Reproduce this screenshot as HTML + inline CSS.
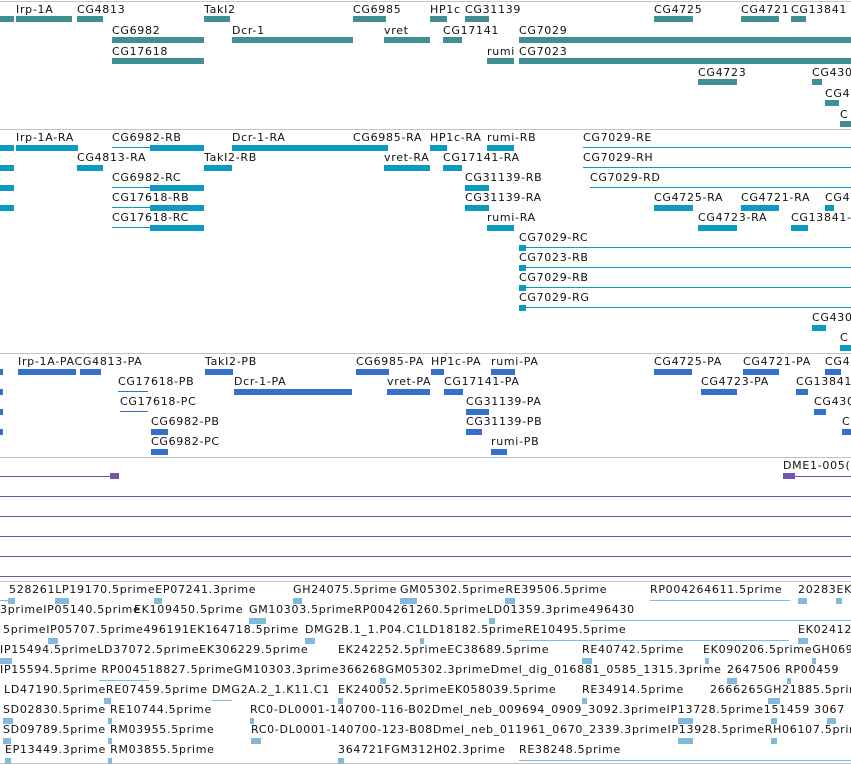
<!DOCTYPE html>
<html><head><meta charset="utf-8">
<style>
body{margin:0;width:851px;height:765px;overflow:hidden;background:#fff;position:relative;font-family:"DejaVu Sans","Liberation Sans",sans-serif;}
.t{position:absolute;font-size:11px;line-height:13px;color:#111;white-space:nowrap;letter-spacing:0.7px;}
.b{position:absolute;height:6px;}
.l{position:absolute;height:1px;}
.d{position:absolute;left:0;width:851px;height:1px;background:#c4c4c4;}
.a{background:#3f8f93}.c{background:#0b9ac0}.p{background:#3470cc}.v{background:#7454ad}.e{background:#82bade}
</style></head><body>
<div class="d" style="top:1px"></div>
<div class="d" style="top:129px"></div>
<div class="d" style="top:353px"></div>
<div class="d" style="top:457px"></div>
<div class="d" style="top:581px;"></div>
<div class="d" style="top:763px"></div>

<!-- Track 1 -->
<div class="b a" style="left:0;top:16px;width:14px"></div>
<div class="t" style="left:16px;top:3px">Irp-1A</div><div class="b a" style="left:16px;top:16px;width:56px"></div>
<div class="t" style="left:77px;top:3px">CG4813</div><div class="b a" style="left:77px;top:16px;width:26px"></div>
<div class="t" style="left:204px;top:3px">TakI2</div><div class="b a" style="left:204px;top:16px;width:26px"></div>
<div class="t" style="left:353px;top:3px">CG6985</div><div class="b a" style="left:353px;top:16px;width:33px"></div>
<div class="t" style="left:430px;top:3px">HP1c</div><div class="b a" style="left:430px;top:16px;width:17px"></div>
<div class="t" style="left:465px;top:3px">CG31139</div><div class="b a" style="left:465px;top:16px;width:24px"></div>
<div class="t" style="left:654px;top:3px">CG4725</div><div class="b a" style="left:654px;top:16px;width:39px"></div>
<div class="t" style="left:741px;top:3px">CG4721</div><div class="b a" style="left:741px;top:16px;width:38px"></div>
<div class="t" style="left:791px;top:3px">CG13841</div><div class="b a" style="left:791px;top:16px;width:15px"></div>
<div class="t" style="left:112px;top:24px">CG6982</div><div class="b a" style="left:112px;top:37px;width:92px"></div>
<div class="t" style="left:232px;top:24px">Dcr-1</div><div class="b a" style="left:232px;top:37px;width:121px"></div>
<div class="t" style="left:384px;top:24px">vret</div><div class="b a" style="left:384px;top:37px;width:46px"></div>
<div class="t" style="left:443px;top:24px">CG17141</div><div class="b a" style="left:443px;top:37px;width:19px"></div>
<div class="t" style="left:519px;top:24px">CG7029</div><div class="b a" style="left:519px;top:37px;width:332px"></div>
<div class="t" style="left:112px;top:45px">CG17618</div><div class="b a" style="left:112px;top:58px;width:92px"></div>
<div class="t" style="left:487px;top:45px">rumi</div><div class="b a" style="left:487px;top:58px;width:27px"></div>
<div class="t" style="left:519px;top:45px">CG7023</div><div class="b a" style="left:519px;top:58px;width:332px"></div>
<div class="t" style="left:698px;top:66px">CG4723</div><div class="b a" style="left:698px;top:79px;width:39px"></div>
<div class="t" style="left:812px;top:66px">CG430</div><div class="b a" style="left:812px;top:79px;width:10px"></div>
<div class="t" style="left:825px;top:87px">CG4</div><div class="b a" style="left:825px;top:100px;width:14px"></div>
<div class="t" style="left:840px;top:108px">C</div><div class="b a" style="left:840px;top:121px;width:11px"></div>

<!-- Track 2 -->
<div class="b c" style="left:0;top:145px;width:14px"></div>
<div class="t" style="left:16px;top:131px">Irp-1A-RA</div><div class="b c" style="left:16px;top:145px;width:62px"></div>
<div class="t" style="left:112px;top:131px">CG6982-RB</div><div class="l c" style="left:112px;top:147px;width:40px"></div><div class="b c" style="left:150px;top:145px;width:54px"></div>
<div class="t" style="left:232px;top:131px">Dcr-1-RA</div><div class="b c" style="left:232px;top:145px;width:156px"></div>
<div class="t" style="left:353px;top:131px">CG6985-RA</div>
<div class="t" style="left:430px;top:131px">HP1c-RA</div><div class="b c" style="left:430px;top:145px;width:17px"></div>
<div class="t" style="left:487px;top:131px">rumi-RB</div><div class="b c" style="left:487px;top:145px;width:27px"></div>
<div class="t" style="left:583px;top:131px">CG7029-RE</div><div class="l c" style="left:583px;top:147px;width:268px"></div>
<div class="b c" style="left:0;top:165px;width:14px"></div>
<div class="t" style="left:77px;top:151px">CG4813-RA</div><div class="b c" style="left:77px;top:165px;width:26px"></div>
<div class="t" style="left:204px;top:151px">TakI2-RB</div><div class="b c" style="left:204px;top:165px;width:28px"></div>
<div class="t" style="left:384px;top:151px">vret-RA</div><div class="b c" style="left:384px;top:165px;width:46px"></div>
<div class="t" style="left:443px;top:151px">CG17141-RA</div><div class="b c" style="left:443px;top:165px;width:19px"></div>
<div class="t" style="left:583px;top:151px">CG7029-RH</div><div class="l c" style="left:583px;top:167px;width:268px"></div>
<div class="b c" style="left:0;top:185px;width:14px"></div>
<div class="t" style="left:112px;top:171px">CG6982-RC</div><div class="l c" style="left:112px;top:187px;width:40px"></div><div class="b c" style="left:150px;top:185px;width:54px"></div>
<div class="t" style="left:465px;top:171px">CG31139-RB</div><div class="b c" style="left:465px;top:185px;width:24px"></div>
<div class="t" style="left:590px;top:171px">CG7029-RD</div><div class="l c" style="left:590px;top:187px;width:261px"></div>
<div class="b c" style="left:0;top:205px;width:14px"></div>
<div class="t" style="left:112px;top:191px">CG17618-RB</div><div class="l c" style="left:112px;top:207px;width:40px"></div><div class="b c" style="left:150px;top:205px;width:54px"></div>
<div class="t" style="left:465px;top:191px">CG31139-RA</div><div class="b c" style="left:465px;top:205px;width:24px"></div>
<div class="t" style="left:654px;top:191px">CG4725-RA</div><div class="b c" style="left:654px;top:205px;width:39px"></div>
<div class="t" style="left:741px;top:191px">CG4721-RA</div><div class="b c" style="left:741px;top:205px;width:38px"></div>
<div class="t" style="left:825px;top:191px">CG4</div><div class="b c" style="left:825px;top:205px;width:9px"></div>
<div class="t" style="left:112px;top:211px">CG17618-RC</div><div class="l c" style="left:112px;top:227px;width:40px"></div><div class="b c" style="left:150px;top:225px;width:54px"></div>
<div class="t" style="left:487px;top:211px">rumi-RA</div><div class="b c" style="left:487px;top:225px;width:27px"></div>
<div class="t" style="left:698px;top:211px">CG4723-RA</div><div class="b c" style="left:698px;top:225px;width:39px"></div>
<div class="t" style="left:791px;top:211px">CG13841-</div><div class="b c" style="left:791px;top:225px;width:17px"></div>
<div class="t" style="left:519px;top:231px">CG7029-RC</div><div class="l c" style="left:519px;top:247px;width:332px"></div><div class="b c" style="left:519px;top:245px;width:7px"></div>
<div class="t" style="left:519px;top:251px">CG7023-RB</div><div class="l c" style="left:519px;top:267px;width:332px"></div><div class="b c" style="left:519px;top:265px;width:7px"></div>
<div class="t" style="left:519px;top:271px">CG7029-RB</div><div class="l c" style="left:519px;top:287px;width:332px"></div><div class="b c" style="left:519px;top:285px;width:7px"></div>
<div class="t" style="left:519px;top:291px">CG7029-RG</div><div class="l c" style="left:519px;top:307px;width:332px"></div><div class="b c" style="left:519px;top:305px;width:7px"></div>
<div class="t" style="left:812px;top:311px">CG430</div><div class="b c" style="left:812px;top:325px;width:14px"></div>
<div class="t" style="left:840px;top:331px">C</div><div class="b c" style="left:840px;top:345px;width:11px"></div>

<!-- Track 3 -->
<div class="b p" style="left:0;top:369px;width:3px"></div>
<div class="t" style="left:18px;top:355px">Irp-1A-PACG4813-PA</div><div class="b p" style="left:18px;top:369px;width:58px"></div><div class="b p" style="left:80px;top:369px;width:21px"></div>
<div class="t" style="left:205px;top:355px">TakI2-PB</div><div class="b p" style="left:205px;top:369px;width:28px"></div>
<div class="t" style="left:356px;top:355px">CG6985-PA</div><div class="b p" style="left:356px;top:369px;width:33px"></div>
<div class="t" style="left:431px;top:355px">HP1c-PA</div><div class="b p" style="left:431px;top:369px;width:13px"></div>
<div class="t" style="left:491px;top:355px">rumi-PA</div><div class="b p" style="left:491px;top:369px;width:24px"></div>
<div class="t" style="left:654px;top:355px">CG4725-PA</div><div class="b p" style="left:654px;top:369px;width:38px"></div>
<div class="t" style="left:743px;top:355px">CG4721-PA</div><div class="b p" style="left:743px;top:369px;width:36px"></div>
<div class="t" style="left:825px;top:355px">CG4</div><div class="b p" style="left:825px;top:369px;width:16px"></div>
<div class="b p" style="left:0;top:389px;width:3px"></div>
<div class="t" style="left:118px;top:375px">CG17618-PB</div><div class="l p" style="left:118px;top:391px;width:30px"></div>
<div class="t" style="left:234px;top:375px">Dcr-1-PA</div><div class="b p" style="left:234px;top:389px;width:118px"></div>
<div class="t" style="left:387px;top:375px">vret-PA</div><div class="b p" style="left:387px;top:389px;width:43px"></div>
<div class="t" style="left:444px;top:375px">CG17141-PA</div><div class="b p" style="left:444px;top:389px;width:19px"></div>
<div class="t" style="left:701px;top:375px">CG4723-PA</div><div class="b p" style="left:701px;top:389px;width:36px"></div>
<div class="t" style="left:796px;top:375px">CG13841</div><div class="b p" style="left:796px;top:389px;width:12px"></div>
<div class="b p" style="left:0;top:409px;width:3px"></div>
<div class="t" style="left:120px;top:395px">CG17618-PC</div><div class="l p" style="left:120px;top:411px;width:28px"></div>
<div class="t" style="left:466px;top:395px">CG31139-PA</div><div class="b p" style="left:466px;top:409px;width:23px"></div>
<div class="t" style="left:814px;top:395px">CG430</div><div class="b p" style="left:814px;top:409px;width:12px"></div>
<div class="b p" style="left:0;top:429px;width:3px"></div>
<div class="t" style="left:151px;top:415px">CG6982-PB</div><div class="b p" style="left:151px;top:429px;width:17px"></div>
<div class="t" style="left:466px;top:415px">CG31139-PB</div><div class="b p" style="left:466px;top:429px;width:16px"></div>
<div class="t" style="left:842px;top:415px">C</div><div class="b p" style="left:842px;top:429px;width:9px"></div>
<div class="t" style="left:151px;top:435px">CG6982-PC</div><div class="b p" style="left:151px;top:449px;width:17px"></div>
<div class="t" style="left:491px;top:435px">rumi-PB</div><div class="b p" style="left:491px;top:449px;width:16px"></div>

<!-- Purple track -->
<div class="t" style="left:783px;top:459px">DME1-005(</div>
<div class="l v" style="left:0;top:476px;width:112px"></div><div class="b v" style="left:110px;top:473px;width:9px"></div>
<div class="b v" style="left:783px;top:473px;width:12px"></div><div class="l v" style="left:795px;top:476px;width:56px"></div>
<div class="l v" style="left:0;top:496px;width:851px"></div>
<div class="l v" style="left:0;top:516px;width:851px"></div>
<div class="l v" style="left:0;top:536px;width:851px"></div>
<div class="l v" style="left:0;top:556px;width:851px"></div>
<div class="l v" style="left:0;top:576px;width:851px"></div>

<!-- EST track -->
<div class="t" style="left:9px;top:583px">528261LP19170.5primeEP07241.3prime</div>
<div class="t" style="left:293px;top:583px">GH24075.5prime</div>
<div class="t" style="left:400px;top:583px">GM05302.5primeRE39506.5prime</div>
<div class="t" style="left:650px;top:583px">RP004264611.5prime</div>
<div class="t" style="left:798px;top:583px">20283EK</div>
<div class="l e" style="left:0;top:600px;width:10px"></div><div class="b e" style="left:8px;top:598px;width:7px"></div><div class="b e" style="left:55px;top:598px;width:14px"></div><div class="b e" style="left:154px;top:598px;width:8px"></div><div class="b e" style="left:293px;top:598px;width:9px"></div><div class="b e" style="left:400px;top:598px;width:17px"></div><div class="b e" style="left:505px;top:598px;width:10px"></div><div class="l e" style="left:650px;top:600px;width:140px"></div><div class="b e" style="left:798px;top:598px;width:9px"></div><div class="b e" style="left:836px;top:598px;width:6px"></div>
<div class="t" style="left:0;top:603px">3primeIP05140.5prime</div>
<div class="t" style="left:134px;top:603px">EK109450.5prime</div>
<div class="t" style="left:249px;top:603px">GM10303.5primeRP004261260.5primeLD01359.3prime496430</div>
<div class="b e" style="left:249px;top:618px;width:17px"></div><div class="b e" style="left:489px;top:618px;width:6px"></div><div class="l e" style="left:590px;top:620px;width:261px"></div>
<div class="t" style="left:3px;top:623px">5primeIP05707.5prime496191EK164718.5prime</div>
<div class="t" style="left:305px;top:623px">DMG2B.1_1.P04.C1LD18182.5primeRE10495.5prime</div>
<div class="t" style="left:798px;top:623px">EK02412</div>
<div class="b e" style="left:48px;top:638px;width:10px"></div><div class="b e" style="left:305px;top:638px;width:10px"></div><div class="b e" style="left:420px;top:638px;width:4px"></div><div class="l e" style="left:519px;top:640px;width:270px"></div><div class="b e" style="left:798px;top:638px;width:10px"></div>
<div class="t" style="left:0;top:643px">IP15494.5primeLD37072.5primeEK306229.5prime</div>
<div class="t" style="left:338px;top:643px">EK242252.5primeEC38689.5prime</div>
<div class="t" style="left:582px;top:643px">RE40742.5prime</div>
<div class="t" style="left:703px;top:643px">EK090206.5primeGH069</div>
<div class="b e" style="left:0;top:658px;width:12px"></div><div class="b e" style="left:582px;top:658px;width:10px"></div><div class="b e" style="left:705px;top:658px;width:4px"></div><div class="b e" style="left:812px;top:658px;width:4px"></div>
<div class="t" style="left:0;top:663px">IP15594.5prime RP004518827.5primeGM10303.3prime366268GM05302.3primeDmel_dig_016881_0585_1315.3prime</div>
<div class="t" style="left:727px;top:663px">2647506 RP00459</div>
<div class="l e" style="left:99px;top:680px;width:50px"></div><div class="b e" style="left:380px;top:678px;width:6px"></div><div class="b e" style="left:727px;top:678px;width:10px"></div><div class="b e" style="left:787px;top:678px;width:4px"></div>
<div class="t" style="left:4px;top:683px">LD47190.5primeRE07459.5prime</div>
<div class="t" style="left:212px;top:683px">DMG2A.2_1.K11.C1</div>
<div class="t" style="left:338px;top:683px">EK240052.5primeEK058039.5prime</div>
<div class="t" style="left:582px;top:683px">RE34914.5prime</div>
<div class="t" style="left:710px;top:683px">2666265GH21885.5prime</div>
<div class="b e" style="left:104px;top:698px;width:7px"></div><div class="l e" style="left:212px;top:700px;width:20px"></div><div class="b e" style="left:338px;top:698px;width:5px"></div><div class="b e" style="left:582px;top:698px;width:5px"></div><div class="b e" style="left:768px;top:698px;width:12px"></div>
<div class="t" style="left:3px;top:703px">SD02830.5prime RE10744.5prime</div>
<div class="t" style="left:250px;top:703px">RC0-DL0001-140700-116-B02Dmel_neb_009694_0909_3092.3primeIP13728.5prime151459 3067</div>
<div class="b e" style="left:3px;top:718px;width:10px"></div><div class="b e" style="left:108px;top:718px;width:4px"></div><div class="b e" style="left:250px;top:718px;width:4px"></div><div class="b e" style="left:678px;top:718px;width:15px"></div><div class="b e" style="left:771px;top:718px;width:6px"></div><div class="b e" style="left:827px;top:718px;width:9px"></div>
<div class="t" style="left:3px;top:723px">SD09789.5prime RM03955.5prime</div>
<div class="t" style="left:251px;top:723px">RC0-DL0001-140700-123-B08Dmel_neb_011961_0670_2339.3primeIP13928.5primeRH06107.5prime</div>
<div class="b e" style="left:3px;top:738px;width:8px"></div><div class="b e" style="left:108px;top:738px;width:4px"></div><div class="b e" style="left:251px;top:738px;width:10px"></div><div class="b e" style="left:678px;top:738px;width:15px"></div><div class="b e" style="left:771px;top:738px;width:6px"></div>
<div class="t" style="left:5px;top:743px">EP13449.3prime RM03855.5prime</div>
<div class="t" style="left:338px;top:743px">364721FGM312H02.3prime</div>
<div class="t" style="left:519px;top:743px">RE38248.5prime</div>
<div class="b e" style="left:5px;top:758px;width:6px"></div><div class="b e" style="left:108px;top:758px;width:4px"></div><div class="b e" style="left:338px;top:758px;width:6px"></div><div class="l e" style="left:519px;top:760px;width:332px"></div>
</body></html>
